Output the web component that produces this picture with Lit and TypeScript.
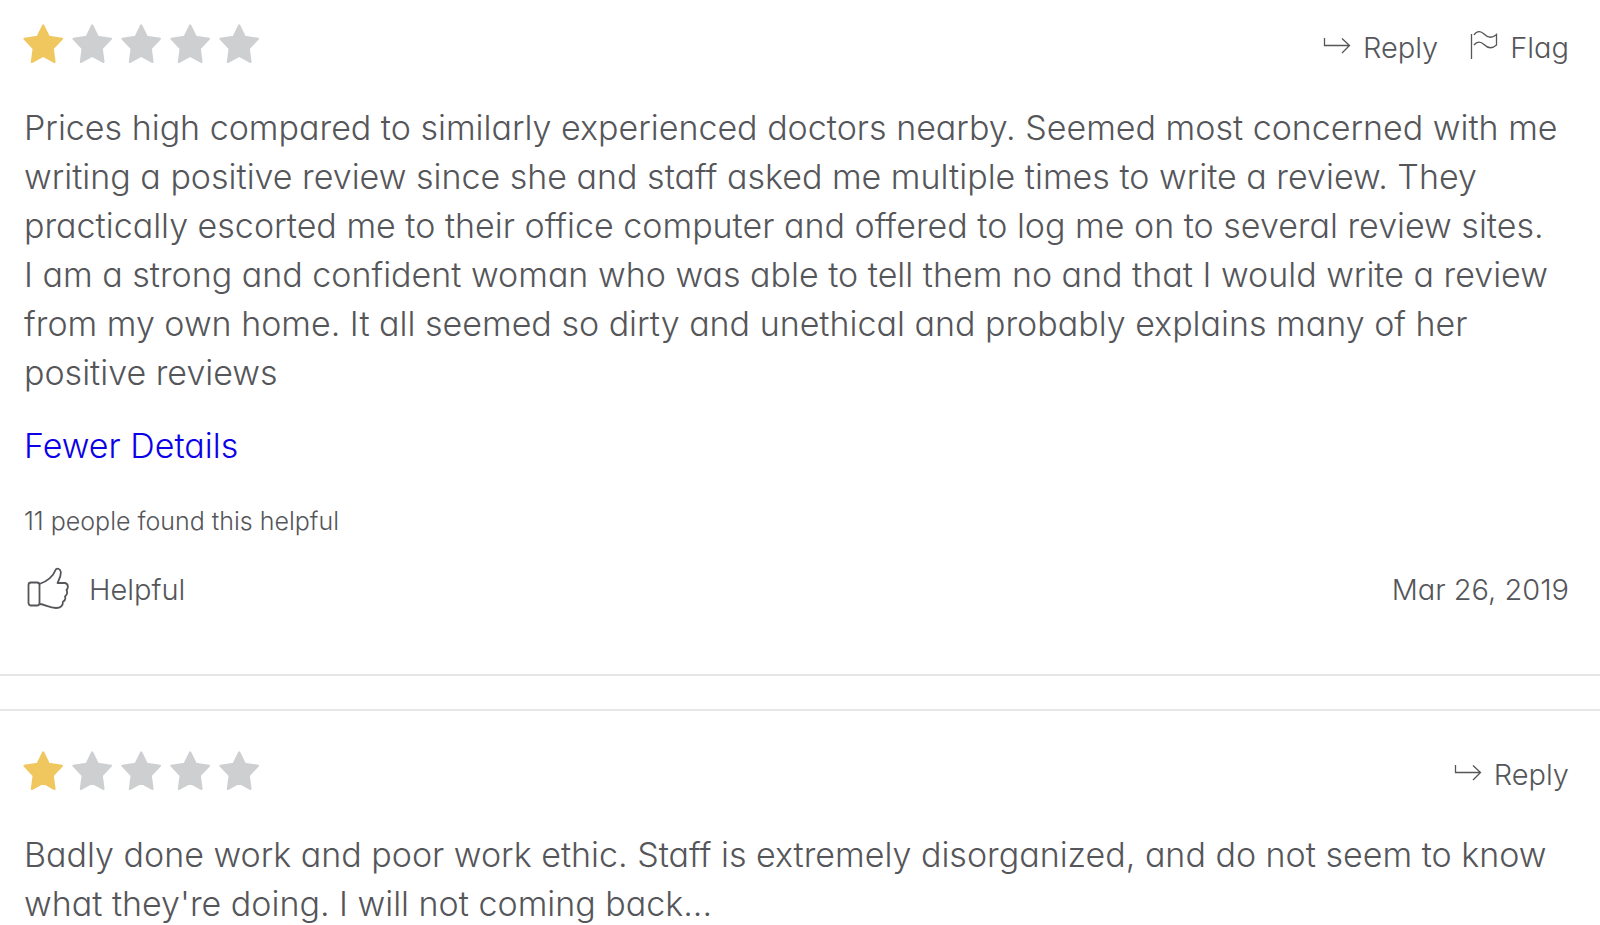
import { LitElement, html, css, nothing } from "lit";
import { customElement, property } from "lit/decorators.js";

interface Review {
  rating: number;
  lines: string[];
  canFlag: boolean;
  helpful?: number;
  date?: string;
}

const REVIEWS: Review[] = [
  {
    rating: 1,
    canFlag: true,
    lines: [
      "Prices high compared to similarly experienced doctors nearby. Seemed most concerned with me",
      "writing a positive review since she and staff asked me multiple times to write a review. They",
      "practically escorted me to their office computer and offered to log me on to several review sites.",
      "I am a strong and confident woman who was able to tell them no and that I would write a review",
      "from my own home. It all seemed so dirty and unethical and probably explains many of her",
      "positive reviews",
    ],
    helpful: 11,
    date: "Mar 26, 2019",
  },
  {
    rating: 1,
    canFlag: false,
    lines: [
      "Badly done work and poor work ethic. Staff is extremely disorganized, and do not seem to know",
      "what they're doing. I will not coming back...",
    ],
  },
];

@customElement("star-rating")
export class StarRating extends LitElement {
  @property({ type: Number }) value = 0;

  static styles = css`
    :host { display: flex; gap: 9px; }
    svg { width: 40px; height: 40px; fill: #cdcfd1; stroke: #cdcfd1; overflow: visible; }
    .on { fill: #f0c75e; stroke: #f0c75e; }
  `;

  render() {
    return [1, 2, 3, 4, 5].map(
      (n) => html`<svg class=${n <= this.value ? "on" : "off"} viewBox="0 0 40 40" stroke-width="2" stroke-linejoin="round" aria-hidden="true">
        <path d="M19.200 1.300 L24.800 12.700 L38 14.700 L28.800 24.500 L30.600 38 L19.200 31.800 L7.800 38 L9.600 24.500 L0.400 14.700 L13.600 12.700Z" />
      </svg>`
    );
  }
}

@customElement("review-card")
export class ReviewCard extends LitElement {
  @property({ attribute: false }) review!: Review;

  static styles = css`
    :host {
      display: block;
      padding: 24px 31px 62px 24px;
      color: #55565a;
    }
    .top, .bottom { display: flex; justify-content: space-between; align-items: center; }
    .top { height: 40px; }
    .actions { display: flex; gap: 32px; }
    button {
      display: flex;
      align-items: center;
      padding: 0;
      border: 0;
      background: none;
      font: inherit;
      font-feature-settings: inherit;
      font-optical-sizing: inherit;
      font-size: 29px;
      line-height: 40px;
      color: inherit;
      cursor: pointer;
    }
    .actions button { gap: 12px; padding-top: 7px; }
    svg { fill: none; stroke: currentColor; }
    .action-icon { width: 28px; height: 32px; margin-bottom: 6px; }
    .thumb { width: 42px; height: 44px; margin-bottom: 4px; }
    .vote { gap: 20px; padding-left: 3px; }
    .bottom { height: 44px; }
    .text { margin: 39px 0 0; font-size: 34px; line-height: 49px; }
    .more { display: block; width: fit-content; margin-top: 24px; font-size: 34px; line-height: 49px; color: #0b00e8; text-decoration: none; }
    .count { margin: 33px 0 29px; font-size: 25px; line-height: 36px; }
    time { font-size: 29px; line-height: 40px; }
  `;

  render() {
    const r = this.review;
    return html`
      <div class="top">
        <star-rating .value=${r.rating} role="img" aria-label="${r.rating} out of 5"></star-rating>
        <div class="actions">
          <button type="button">
            <svg class="action-icon" viewBox="0 0 28 32" stroke-width="1.3" aria-hidden="true">
              <path d="M1.5 9V16.5H26.5M19 9.5L26.5 16.5L19 24" />
            </svg>Reply
          </button>
          ${r.canFlag
            ? html`<button type="button">
                <svg class="action-icon" viewBox="0 0 28 32" stroke-width="1.3" aria-hidden="true">
                  <path d="M1.500 5V30M4 6C7 1.500 11 2 14 5C18 9 22 9.500 26.500 5.500V16C22 20 18 19.500 14 15.500C11 12.500 7 12 4 16" />
                </svg>Flag
              </button>`
            : nothing}
        </div>
      </div>
      <p class="text">${r.lines.map((l, i) => (i ? html`<br />${l}` : l))}</p>
      ${r.helpful
        ? html`
            <a class="more" href="#">Fewer Details</a>
            <p class="count">${r.helpful} people found this helpful</p>
            <div class="bottom">
              <button type="button" class="vote">
                <svg class="thumb" viewBox="0 0 42 44" stroke-width="1.800" stroke-linejoin="round" aria-hidden="true">
                  <rect x="1.500" y="16.500" width="11" height="23" rx="2.500" />
                  <path d="M12.500 18C20 15.500 26.500 10 28.500 4C29.500 1.500 33.500 2.500 33.800 6C34.200 10 32 13.500 30.500 17H38C41.500 17.500 41.500 22 39.500 24C41 26.500 39.500 29.500 38 30.500C39 33 37.500 35 36 35.500C36 39.500 34 42 29 42C22 42 18.500 38.500 12.500 38" />
                </svg>Helpful
              </button>
              <time datetime="2019-03-26">${r.date}</time>
            </div>`
        : nothing}
    `;
  }
}

@customElement("app-root")
export class AppRoot extends LitElement {
  static styles = css`
    :host {
      display: flex;
      flex-direction: column;
      gap: 33px;
      height: 100vh;
      overflow: hidden;
      background: #fff;
      font-family: Inter, "Open Sans", sans-serif;
      font-weight: 300;
      font-optical-sizing: none;
      font-feature-settings: "cv11";
    }
    review-card { flex: none; border-bottom: 2px solid #e6e6e6; }
    review-card + review-card { padding-top: 40px; border-top: 2px solid #e6e6e6; }
  `;

  render() {
    return REVIEWS.map((r) => html`<review-card .review=${r}></review-card>`);
  }
}
